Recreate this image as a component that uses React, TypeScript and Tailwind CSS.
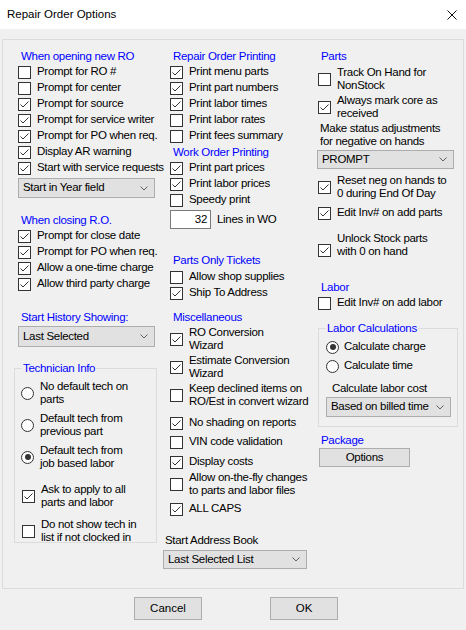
import React from 'react';
import clsx from 'clsx';

type Kids = { children?: React.ReactNode; className?: string };

const Box = ({ checked }: { checked?: boolean }) => (
  <span className="flex h-[13px] w-[13px] shrink-0 items-center justify-center border border-[#333333] bg-white">
    {checked && (
      <svg width="11" height="11" viewBox="0 0 11 11">
        <path d="M1.5 5.5 L4 8 L9.5 2.5" fill="none" stroke="#333333" strokeWidth="1" />
      </svg>
    )}
  </span>
);

const Radio = ({ on }: { on?: boolean }) => (
  <span className="flex h-[13px] w-[13px] shrink-0 items-center justify-center rounded-full border border-[#333333] bg-white">
    {on && <span className="h-[6px] w-[6px] rounded-full bg-[#333333]" />}
  </span>
);

// single or two-line checkbox row
const Check = ({ checked, children, className, low }: Kids & { checked?: boolean; low?: boolean }) => (
  <div className={clsx('flex items-center gap-[6px]', className)}>
    <span className={clsx(low && 'mt-[10px]')}>
      <Box checked={checked} />
    </span>
    <span className="whitespace-nowrap">{children}</span>
  </div>
);

const Row = ({ checked, children, className }: Kids & { checked?: boolean }) => (
  <Check checked={checked} className={clsx('h-4', className)}>
    {children}
  </Check>
);

const Two = ({ checked, children, className, low }: Kids & { checked?: boolean; low?: boolean }) => (
  <Check checked={checked} low={low} className={clsx('leading-[13px]', className)}>
    {children}
  </Check>
);

const Heading = ({ children, className }: Kids) => (
  <div className={clsx('h-4 leading-4 whitespace-nowrap text-[#0000ff]', className)}>{children}</div>
);

const Combo = ({ value, className }: { value: string; className?: string }) => (
  <div
    className={clsx(
      'flex items-center justify-between border border-[#adadad] bg-[#e1e1e1] pl-[4px] pr-[6px]',
      className
    )}
  >
    <span className="whitespace-nowrap">{value}</span>
    <svg width="8" height="5" viewBox="0 0 8 5" className="shrink-0">
      <path d="M0.5 0.5 L4 4 L7.5 0.5" fill="none" stroke="#606060" strokeWidth="1" />
    </svg>
  </div>
);

const Group = ({ title, children, className }: Kids & { title: string }) => (
  <fieldset className={clsx('border border-[#dcdcdc]', className)}>
    <legend className="ml-[7px] px-[1px] leading-4 text-[#0000ff]">{title}</legend>
    {children}
  </fieldset>
);

const Button = ({ children, className }: Kids) => (
  <div className={clsx('flex items-center justify-center border border-[#adadad] bg-[#e1e1e1]', className)}>
    {children}
  </div>
);

export default function App() {
  return (
    <div className="h-[630px] w-[466px] overflow-hidden bg-[#f0f0f0] font-['Liberation_Sans',Arial,sans-serif] text-[11.5px] text-black">
      {/* title bar */}
      <div className="flex h-[29px] items-center justify-between bg-white pl-[7px] pr-[9px]">
        <span>Repair Order Options</span>
        <svg width="10" height="10" viewBox="0 0 10 10">
          <path d="M0.5 0.5 L9.5 9.5 M9.5 0.5 L0.5 9.5" fill="none" stroke="#111111" strokeWidth="1" />
        </svg>
      </div>

      <div className="mx-[2px] mt-[10px] flex h-[550px] border border-[#dcdcdc] pl-[11px] tracking-[-0.3px]">
        {/* left column */}
        <div className="flex w-[146px] flex-col pt-[8px]">
          <Heading className="ml-[7px]">When opening new RO</Heading>
          <div className="ml-[4px] flex flex-col">
            <Row>Prompt for RO #</Row>
            <Row>Prompt for center</Row>
            <Row checked>Prompt for source</Row>
            <Row checked>Prompt for service writer</Row>
            <Row checked>Prompt for PO when req.</Row>
            <Row checked>Display AR warning</Row>
            <Row checked>Start with service requests</Row>
          </div>
          <Combo value="Start in Year field" className="ml-[4px] mt-[2px] h-[20px] w-[137px]" />

          <Heading className="ml-[7px] mt-[14px]">When closing R.O.</Heading>
          <div className="ml-[4px] flex flex-col">
            <Row checked>Prompt for close date</Row>
            <Row checked>Prompt for PO when req.</Row>
            <Row checked>Allow a one-time charge</Row>
            <Row checked>Allow third party charge</Row>
          </div>

          <Heading className="ml-[7px] mt-[17px]">Start History Showing:</Heading>
          <Combo value="Last Selected" className="ml-[4px] mt-[1px] h-[21px] w-[137px]" />

          <Group title="Technician Info" className="mt-[13px] h-[183px] w-[143px]">
            <div className="flex flex-col leading-[13px]">
              <div className="mt-[4px] flex items-center gap-[6px] pl-[6px]">
                <Radio />
                <span>
                  No default tech on
                  <br />
                  parts
                </span>
              </div>
              <div className="mt-[6px] flex items-center gap-[6px] pl-[6px]">
                <Radio />
                <span>
                  Default tech from
                  <br />
                  previous part
                </span>
              </div>
              <div className="mt-[6px] flex items-center gap-[6px] pl-[6px]">
                <Radio on />
                <span>
                  Default tech from
                  <br />
                  job based labor
                </span>
              </div>
              <Two checked className="mt-[13px] pl-[7px]">
                Ask to apply to all
                <br />
                parts and labor
              </Two>
              <Two className="mt-[9px] pl-[7px]">
                Do not show tech in
                <br />
                list if not clocked in
              </Two>
            </div>
          </Group>
        </div>

        {/* middle column */}
        <div className="ml-[3px] flex w-[150px] flex-col pt-[8px]">
          <Heading className="ml-[10px]">Repair Order Printing</Heading>
          <div className="ml-[7px] flex flex-col">
            <Row checked>Print menu parts</Row>
            <Row checked>Print part numbers</Row>
            <Row checked>Print labor times</Row>
            <Row>Print labor rates</Row>
            <Row>Print fees summary</Row>
          </div>
          <Heading className="ml-[10px]">Work Order Printing</Heading>
          <div className="ml-[7px] flex flex-col">
            <Row checked>Print part prices</Row>
            <Row checked>Print labor prices</Row>
            <Row>Speedy print</Row>
          </div>
          <div className="ml-[7px] mt-[2px] flex items-center gap-[6px]">
            <div className="flex h-[19px] w-[41px] items-center justify-end border border-[#7a7a7a] bg-white pr-[3px]">
              32
            </div>
            <span>Lines in WO</span>
          </div>

          <Heading className="ml-[10px] mt-[23px]">Parts Only Tickets</Heading>
          <div className="ml-[7px] mt-[1px] flex flex-col">
            <Row>Allow shop supplies</Row>
            <Row checked>Ship To Address</Row>
          </div>

          <Heading className="ml-[10px] mt-[8px]">Miscellaneous</Heading>
          <div className="ml-[7px] flex flex-col">
            <Two checked className="mt-[1px]">
              RO Conversion
              <br />
              Wizard
            </Two>
            <Two checked className="mt-[2px]">
              Estimate Conversion
              <br />
              Wizard
            </Two>
            <Two className="mt-[2px]">
              Keep declined items on
              <br />
              RO/Est in convert wizard
            </Two>
            <Row checked className="mt-[7px]">No shading on reports</Row>
            <Row className="mt-[3px]">VIN code validation</Row>
            <Row checked className="mt-[4px]">Display costs</Row>
            <Two className="mt-[1px]">
              Allow on-the-fly changes
              <br />
              to parts and labor files
            </Two>
            <Row checked className="mt-[4px]">ALL CAPS</Row>
          </div>

          <div className="ml-[2px] mt-[15px] h-4 leading-4">Start Address Book</div>
          <Combo value="Last Selected List" className="mt-[2px] h-[19px] w-[144px]" />
        </div>

        {/* right column */}
        <div className="ml-[4px] flex w-[143px] flex-col pt-[8px]">
          <Heading className="ml-[4px]">Parts</Heading>
          <div className="ml-[1px] flex flex-col">
            <Two className="mt-[2px]">
              Track On Hand for
              <br />
              NonStock
            </Two>
            <Two checked className="mt-[2px]">
              Always mark core as
              <br />
              received
            </Two>
          </div>
          <div className="ml-[3px] mt-[2px] leading-[13px]">
            Make status adjustments
            <br />
            for negative on hands
          </div>
          <Combo value="PROMPT" className="mt-[2px] h-[19px] w-[137px]" />
          <div className="ml-[1px] flex flex-col">
            <Two checked className="mt-[5px]">
              Reset neg on hands to
              <br />0 during End Of Day
            </Two>
            <Row checked className="mt-[5px]">Edit Inv# on add parts</Row>
            <Two checked low className="mt-[11px]">
              Unlock Stock parts
              <br />
              with 0 on hand
            </Two>
          </div>

          <Heading className="ml-[4px] mt-[21px]">Labor</Heading>
          <Row className="ml-[1px]">Edit Inv# on add labor</Row>

          <Group title="Labor Calculations" className="ml-[1px] mt-[9px] h-[107px] w-[140px]">
            <div className="flex flex-col">
              <div className="mt-[3px] flex h-4 items-center gap-[5px] pl-[7px]">
                <Radio on />
                <span>Calculate charge</span>
              </div>
              <div className="mt-[3px] flex h-4 items-center gap-[5px] pl-[7px]">
                <Radio />
                <span>Calculate time</span>
              </div>
              <div className="mt-[6px] h-4 pl-[13px] leading-4">Calculate labor cost</div>
              <Combo value="Based on billed time" className="ml-[7px] mt-[1px] h-[20px] w-[125px]" />
            </div>
          </Group>

          <Heading className="ml-[4px] mt-[5px]">Package</Heading>
          <Button className="ml-[2px] h-[19px] w-[91px]">Options</Button>
        </div>
      </div>

      {/* footer buttons */}
      <div className="mt-[8px] flex gap-[68px] pl-[134px]">
        <Button className="h-[23px] w-[68px]">Cancel</Button>
        <Button className="h-[23px] w-[68px]">OK</Button>
      </div>
    </div>
  );
}
